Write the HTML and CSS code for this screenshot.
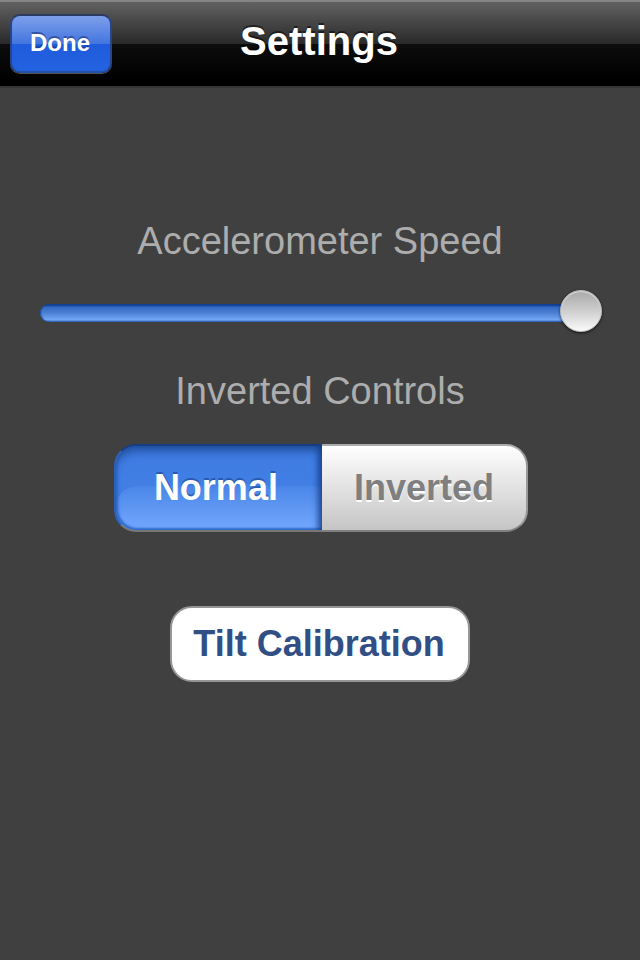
FILE: index.html
```html
<!DOCTYPE html>
<html lang="en">
<head>
<meta charset="utf-8">
<meta name="viewport" content="width=device-width, initial-scale=1">
<title>Settings</title>
<link rel="stylesheet" href="styles.css">
</head>
<body>
<header class="navbar">
  <button class="done" type="button">Done</button>
  <h1 class="title">Settings</h1>
</header>
<main class="settings">
  <label class="label" for="speed">Accelerometer Speed</label>
  <input class="slider" id="speed" type="range" min="0" max="100" value="100">
  <h2 class="label" id="controls-label">Inverted Controls</h2>
  <div class="segments" role="radiogroup" aria-labelledby="controls-label">
    <input class="choice" type="radio" name="controls" id="normal" checked>
    <label class="segment" for="normal">Normal</label>
    <input class="choice" type="radio" name="controls" id="inverted">
    <label class="segment" for="inverted">Inverted</label>
  </div>
  <button class="calibrate" type="button">Tilt Calibration</button>
</main>
</body>
</html>
```
FILE: styles.css
```css
* {
  box-sizing: border-box;
}

body {
  margin: 0;
  min-height: 100vh;
  background: #404040;
  font-family: "Liberation Sans", Arial, sans-serif;
}

button {
  font-family: inherit;
  font-weight: bold;
  cursor: pointer;
}

.navbar {
  display: grid;
  grid-template-columns: 1fr auto 1fr;
  align-items: start;
  height: 88px;
  padding: 14px 12px 0 10px;
  border-bottom: 2px solid #353535;
  background:
    linear-gradient(#858585, #858585) top / 100% 2px no-repeat,
    linear-gradient(#646464 0, #292929 44px, #0d0d0d 44px, #000 80px);
}

.done {
  justify-self: start;
  width: 102px;
  height: 59px;
  padding: 0 2px 2px 0;
  border: 2px solid #29458a;
  border-top-color: #2b3a60;
  border-bottom-color: #2450a5;
  border-radius: 10px;
  background: linear-gradient(#7d9fea 0, #4375df 28px, #1f5cdc 28px, #2362e0 100%);
  box-shadow: 0 1px 0 #555;
  color: #fff;
  font-size: 24px;
  text-shadow: 0 -2px 0 rgba(20, 40, 100, 0.5);
}

.title {
  margin: 0;
  color: #fff;
  font-size: 40px;
  line-height: 54px;
  text-shadow: 0 -2px 0 rgba(0, 0, 0, 0.5);
}

.settings {
  display: flex;
  flex-direction: column;
  align-items: center;
  padding: 130px 40px 40px;
}

.label {
  margin: 0;
  color: #adadad;
  font-size: 38px;
  font-weight: normal;
  line-height: 46px;
}

.slider {
  appearance: none;
  width: calc(100% + 2px);
  height: 42px;
  margin: 26px -2px 36px 0;
  background: none;
  cursor: pointer;
}

.slider::-webkit-slider-runnable-track {
  height: 18px;
  margin-top: 4px;
  border-radius: 9px;
  background: linear-gradient(#0d398b 0, #1949a0 2px, #3569c2 3px, #4b80d5 9px, #74a9f6 16px, #4278c9 17px, #3265b2 18px);
  box-shadow: inset 1px 0 1px #174a9f;
}

.slider::-webkit-slider-thumb {
  appearance: none;
  width: 42px;
  height: 42px;
  margin-top: -14px;
  border: 1px solid #bcbcbc;
  border-radius: 50%;
  background: linear-gradient(#a9a9a9, #cecece 50%, #fafafa);
  box-shadow: 0 1px 3px rgba(0, 0, 0, 0.7), inset 0 1px 1px #ddd;
}

.segments {
  position: relative;
  display: grid;
  grid-template-columns: 208fr 206fr;
  width: 74%;
  min-width: 414px;
  height: 88px;
  margin: 30px 0 74px 2px;
}

.choice {
  position: absolute;
  opacity: 0;
}

.segment {
  display: flex;
  align-items: center;
  justify-content: center;
  padding-bottom: 1px;
  border: 2px solid #999;
  border-top-color: #aaa;
  border-bottom-color: #808080;
  background: linear-gradient(#fff, #e2e2e2 50%, #c5c5c5);
  color: #7f7f7f;
  font-size: 36px;
  font-weight: bold;
  text-shadow: 0 2px 0 #fff;
  cursor: pointer;
}

.segment:first-of-type {
  padding-right: 6px;
  border-right: 0;
  border-radius: 22px 0 0 22px;
}

.segment:last-of-type {
  border-left: 0;
  border-radius: 0 22px 22px 0;
}

.choice:checked + .segment {
  border-color: #2d5fb5;
  border-top-color: #153e87;
  border-bottom-color: #777;
  background:
    radial-gradient(circle at 100% 100%, transparent 19px, #417fe5 20px) 0 40px / 20px 20px no-repeat,
    linear-gradient(#3d7be2 0, #417fe5 40px, #4a86e8 40px, #74a8ff 100%);
  box-shadow:
    inset 0 8px 8px -3px rgba(20, 55, 120, 0.65),
    inset -7px 0 6px -3px rgba(20, 60, 135, 0.8),
    inset 2px -2px 2px #3471d2;
  color: #fff;
  text-shadow: 0 -2px 0 rgba(20, 60, 130, 0.55);
}

.calibrate {
  width: 300px;
  height: 76px;
  padding: 0 2px 1px 0;
  border: 2px solid #969696;
  border-radius: 22px;
  background: #fff;
  color: #314f85;
  font-size: 36px;
}
```
